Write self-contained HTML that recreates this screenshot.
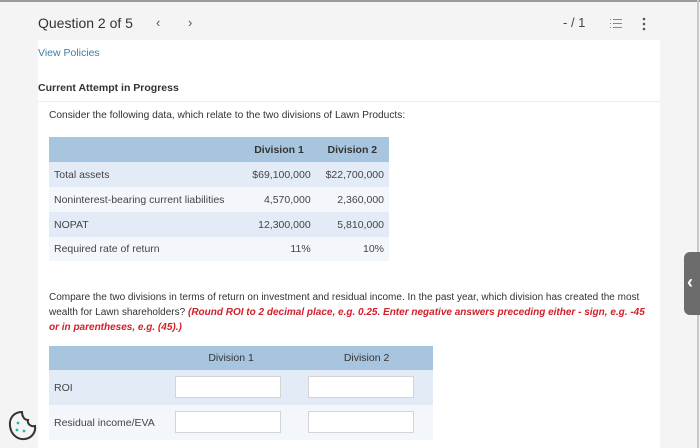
<!DOCTYPE html>
<html><head><style>
*{margin:0;padding:0;box-sizing:border-box}
body{width:700px;height:448px;overflow:hidden;background:#f4f4f4;font-family:"Liberation Sans",sans-serif;color:#333;position:relative}
.abs{position:absolute}
.top{left:0;top:0;width:700px;height:2px;background:#9a9a9a}
.rt{left:697px;top:0;width:2px;height:448px;background:#c8c8c8}
.panel{left:38px;top:40px;width:622px;height:408px;background:#fff}
.t{position:absolute;white-space:nowrap}
table{border-collapse:collapse;position:absolute;font-size:10.5px;color:#444}
td{padding:0 5px}
.h{background:#a8c5df;font-weight:bold;color:#333}
.l{background:#e3ecf6}
.w{background:#f3f7fb}
.inp{position:absolute;width:106px;height:22px;background:#fff;border:1px solid #d4d4d4}
</style></head><body>
<div class="abs top"></div>
<div class="abs panel"></div>
<div class="abs rt"></div>
<div class="t" style="left:38px;top:15px;font-size:14px;color:#333">Question 2 of 5</div>
<div class="t" style="left:156px;top:15px;font-size:13px;color:#555">&lsaquo;</div>
<div class="t" style="left:188px;top:15px;font-size:13px;color:#555">&rsaquo;</div>
<div class="t" style="left:563px;top:15px;font-size:13px;color:#444">- / 1</div>
<svg class="abs" style="left:609px;top:18px" width="14" height="12"><g stroke="#888" stroke-width="1"><line x1="1" y1="1.5" x2="2" y2="1.5"/><line x1="1" y1="5.5" x2="2" y2="5.5"/><line x1="1" y1="9.5" x2="2" y2="9.5"/><line x1="4" y1="1.5" x2="13" y2="1.5"/><line x1="4" y1="5.5" x2="13" y2="5.5"/><line x1="4" y1="9.5" x2="13" y2="9.5"/></g></svg>
<svg class="abs" style="left:642px;top:17px" width="4" height="14"><circle cx="2" cy="2" r="1.3" fill="#555"/><circle cx="2" cy="7" r="1.3" fill="#555"/><circle cx="2" cy="12" r="1.3" fill="#555"/></svg>
<div class="t" style="left:38px;top:47px;font-size:10.5px;color:#3d7fa8">View Policies</div>
<div class="t" style="left:38px;top:82px;font-size:10.5px;font-weight:bold;color:#333">Current Attempt in Progress</div>
<div class="abs" style="left:38px;top:101px;width:622px;height:1px;background:#ececec"></div>
<div class="t" style="left:49px;top:110px;font-size:10.2px;color:#333">Consider the following data, which relate to the two divisions of Lawn Products:</div>
<table style="left:49px;top:137px;width:340px">
<tr class="h" style="height:25px"><td></td><td style="text-align:center">Division 1</td><td style="text-align:center">Division 2</td></tr>
<tr class="l" style="height:25px"><td>Total assets</td><td style="text-align:right">$69,100,000</td><td style="text-align:right">$22,700,000</td></tr>
<tr class="w" style="height:25px"><td>Noninterest-bearing current liabilities</td><td style="text-align:right">4,570,000</td><td style="text-align:right">2,360,000</td></tr>
<tr class="l" style="height:25px"><td>NOPAT</td><td style="text-align:right">12,300,000</td><td style="text-align:right">5,810,000</td></tr>
<tr class="w" style="height:24px"><td>Required rate of return</td><td style="text-align:right">11%</td><td style="text-align:right">10%</td></tr>
</table>
<div class="abs" style="left:49px;top:290px;width:605px;font-size:10px;line-height:15px;color:#333">Compare the two divisions in terms of return on investment and residual income. In the past year, which division has created the most wealth for Lawn shareholders? <b style="color:#d0202a;font-style:italic">(Round ROI to 2 decimal place, e.g. 0.25. Enter negative answers preceding either - sign, e.g. -45 or in parentheses, e.g. (45).)</b></div>
<table style="left:49px;top:346px;width:384px">
<tr class="h" style="height:24px"><td style="width:120px"></td><td style="text-align:center;font-weight:normal">Division 1</td><td style="text-align:center;font-weight:normal;padding-left:12px">Division 2</td></tr>
<tr class="l" style="height:35px"><td>ROI</td><td></td><td></td></tr>
<tr class="w" style="height:35px"><td>Residual income/EVA</td><td></td><td></td></tr>
</table>
<div class="inp" style="left:175px;top:376px"></div>
<div class="inp" style="left:308px;top:376px"></div>
<div class="inp" style="left:175px;top:411px"></div>
<div class="inp" style="left:308px;top:411px"></div>
<div class="abs" style="left:684px;top:252px;width:16px;height:63px;background:#6c6c6c;border-radius:6px 0 0 6px"></div>
<div class="t" style="left:687px;top:272px;font-size:18px;color:#fff;font-weight:bold">&lsaquo;</div>
<svg class="abs" style="left:7px;top:410px" width="30" height="32"><path d="M15 2 C7 2 2 8 3 16 C4 25 11 30 18 29 C25 28 29 22 28 16 C24 17 20 14 21 10 C17 10 15 6 15 2 Z" fill="none" stroke="#333" stroke-width="2"/><circle cx="11" cy="13" r="1.4" fill="#2ba"/><circle cx="10" cy="20" r="1.4" fill="#2ba"/><circle cx="17" cy="21" r="1.4" fill="#2ba"/></svg>
</body></html>
